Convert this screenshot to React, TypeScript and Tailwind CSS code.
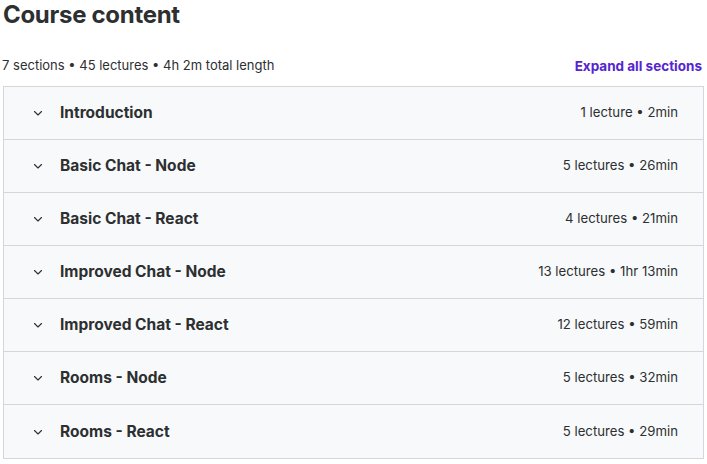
import React from "react";

const sections = [
  { title: "Introduction", meta: "1 lecture • 2min" },
  { title: "Basic Chat - Node", meta: "5 lectures • 26min" },
  { title: "Basic Chat - React", meta: "4 lectures • 21min" },
  { title: "Improved Chat - Node", meta: "13 lectures • 1hr 13min" },
  { title: "Improved Chat - React", meta: "12 lectures • 59min" },
  { title: "Rooms - Node", meta: "5 lectures • 32min" },
  { title: "Rooms - React", meta: "5 lectures • 29min" },
];

function Chevron() {
  return (
    <svg width="12" height="12" viewBox="0 0 12 12" fill="none" className="shrink-0">
      <path d="M2.5 4.5 L6 8 L9.5 4.5" stroke="#2d2f31" strokeWidth="1.1" strokeLinecap="round" strokeLinejoin="round" />
    </svg>
  );
}

export default function App() {
  return (
    <div className="w-[707px] h-[464px] bg-white text-[#2d2f31] overflow-hidden" style={{ fontFamily: "Inter, 'Liberation Sans', sans-serif" }}>
      <h2 className="text-[24px] leading-[29px] font-bold pl-[3px] tracking-[-0.3px]">Course content</h2>
      <div className="flex items-center justify-between pl-[2px] pr-[5px] mt-[27px] h-[20px]">
        <span className="text-[13px]">7 sections • 45 lectures • 4h 2m total length</span>
        <span className="text-[13.5px] font-bold text-[#5624d0]">Expand all sections</span>
      </div>
      <div className="mt-[10px] ml-[3px] w-[701px] border border-[#d1d7dc] bg-[#f7f9fa]">
        {sections.map((s, i) => (
          <div
            key={s.title}
            className={`flex items-center h-[53px] pl-[28px] pr-[25px] ${i < sections.length - 1 ? "border-b border-[#d1d7dc]" : "h-[52px]"}`}
          >
            <Chevron />
            <span className="ml-[16px] text-[15.5px] font-bold">{s.title}</span>
            <span className="ml-auto text-[13.2px]">{s.meta}</span>
          </div>
        ))}
      </div>
    </div>
  );
}
